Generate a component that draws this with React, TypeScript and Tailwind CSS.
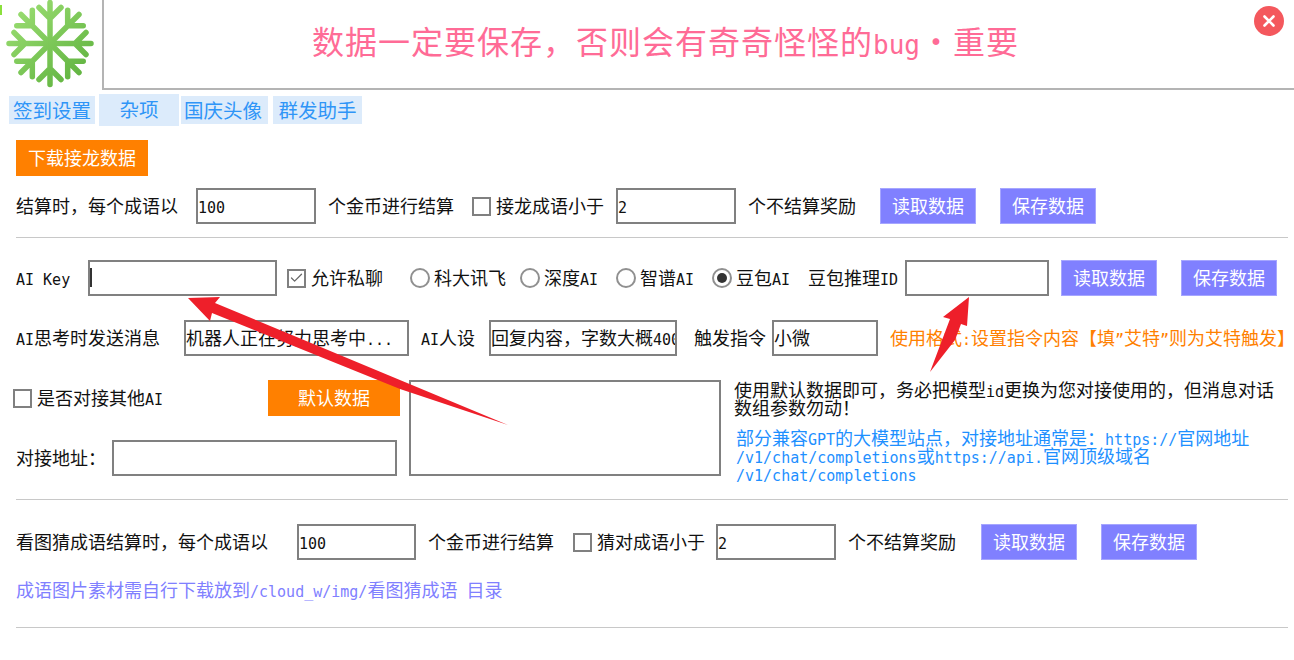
import { Check } from 'lucide-react'
import type { ReactNode } from 'react'

// half-width latin runs, the CJK font's own latin is too wide for this screen
function L({ children }: { children: ReactNode }) {
  return <span className="font-['DejaVu_Sans_Mono',monospace] text-[15px] leading-[0]">{children}</span>
}

function Lbl({ className = '', children }: { className?: string; children: ReactNode }) {
  return <span className={`-mt-[3px] shrink-0 whitespace-nowrap ${className}`}>{children}</span>
}

function Field({ className, children }: { className: string; children?: ReactNode }) {
  return (
    <div className={`flex h-[36px] shrink-0 items-center overflow-hidden whitespace-nowrap border-2 border-[#808080] bg-white text-[18px] ${className}`}>
      <span className="-mt-[2px]">{children}</span>
    </div>
  )
}

function Btn({ className = '', children }: { className?: string; children: ReactNode }) {
  return (
    <div className={`flex h-[36px] w-[96px] shrink-0 items-center justify-center border border-[#a6a6ff] bg-[#8080ff] pb-[2px] text-[18px] text-white ${className}`}>
      {children}
    </div>
  )
}

function Box({ className = '', checked = false }: { className?: string; checked?: boolean }) {
  return (
    <span className={`flex h-[19px] w-[19px] shrink-0 items-center justify-center border-2 border-[#808080] bg-white ${className}`}>
      {checked && <Check className="h-[16px] w-[16px] text-[#666666]" strokeWidth={2} />}
    </span>
  )
}

function Radio({ className, on = false, children }: { className: string; on?: boolean; children: ReactNode }) {
  return (
    <div className={`flex shrink-0 items-center ${className}`}>
      <span className="flex h-[20px] w-[20px] items-center justify-center rounded-full border-2 border-[#909090] bg-white">
        {on && <span className="h-[10px] w-[10px] rounded-full bg-[#333333]" />}
      </span>
      <Lbl className="ml-[4px]">{children}</Lbl>
    </div>
  )
}

function Snowflake() {
  const arms = [0, 45, 90, 135, 180, 225, 270, 315]
  return (
    <svg viewBox="0 0 100 88" className="h-[88px] w-[100px]">
      <defs>
        <linearGradient id="flake" x1="0" y1="0" x2="1" y2="1">
          <stop offset="0" stopColor="#a4e47a" />
          <stop offset="1" stopColor="#55ab36" />
        </linearGradient>
        <mask id="flakeMask">
          <g stroke="#ffffff" strokeWidth="5.5" strokeLinecap="round" fill="none">
            {arms.map((a) => (
              <path key={a} transform={`translate(50 43.5) rotate(${a})`} d="M0 0V-41M0 -25L-11 -36M0 -25L11 -36" />
            ))}
          </g>
        </mask>
      </defs>
      <rect width="100" height="88" fill="url(#flake)" mask="url(#flakeMask)" />
    </svg>
  )
}

function Divider({ className }: { className: string }) {
  return <div className={`ml-[16px] h-[1px] w-[1272px] bg-[#c8c8c8] ${className}`} />
}

export default function App() {
  return (
    <div className="relative h-[660px] w-[1294px] overflow-hidden bg-white font-['Noto_Sans_CJK_SC',sans-serif] text-[18px] leading-[24px] text-[#111111]">
      {/* header */}
      <div className="flex h-[90px]">
        <div className="relative w-[102px] shrink-0">
          <span className="absolute left-0 top-[5px] h-[10px] w-[2px] bg-[#8be03c]" />
          <Snowflake />
        </div>
        <div className="flex flex-1 items-start justify-between border-b-2 border-l-2 border-[#b4b4b4] pl-[208px] pr-[10px]">
          <div className="mt-[18px] whitespace-nowrap text-[32px] leading-[44px] tracking-[1px] text-[#ff6b96]">
            数据一定要保存，否则会有奇奇怪怪的
            <span className="font-['DejaVu_Sans_Mono',monospace] text-[26px] leading-[0] tracking-normal">bug</span>
            <span className="inline-block w-[33px] text-center">·</span>
            重要
          </div>
          <div className="mt-[6px] flex h-[30px] w-[30px] items-center justify-center rounded-full bg-[#f4585d]">
            <svg viewBox="0 0 12 12" className="h-[12px] w-[12px]">
              <path d="M1.5 1.5L10.5 10.5M10.5 1.5L1.5 10.5" stroke="#ffffff" strokeWidth="2.6" strokeLinecap="round" />
            </svg>
          </div>
        </div>
      </div>

      {/* tabs */}
      <div className="mt-[4px] flex h-[32px] items-center pl-[9px] text-[19.5px] text-[#2f95f7]">
        <div className="flex h-[28px] w-[86px] items-center justify-center whitespace-nowrap bg-[#dcebfb]">签到设置</div>
        <div className="ml-[4px] flex h-[32px] w-[80px] items-center justify-center bg-[#dcebfb] pb-[2px]">杂项</div>
        <div className="ml-[2px] flex h-[28px] w-[87px] items-center whitespace-nowrap bg-[#dcebfb] pl-[3px]">国庆头像</div>
        <div className="ml-[5px] flex h-[28px] w-[89px] items-center justify-center whitespace-nowrap bg-[#dcebfb]">群发助手</div>
      </div>

      <div className="ml-[16px] mt-[14px] flex h-[36px] w-[132px] items-center justify-center bg-[#ff8000] pb-[2px] text-white">
        下载接龙数据
      </div>

      {/* idiom chain settlement */}
      <div className="mt-[12px] flex items-center pl-[16px]">
        <Lbl className="w-[180px]">结算时，每个成语以</Lbl>
        <Field className="w-[120px]"><L>100</L></Field>
        <Lbl className="ml-[12px] w-[125px]">个金币进行结算</Lbl>
        <Box className="ml-[19px]" />
        <Lbl className="ml-[5px] w-[108px]">接龙成语小于</Lbl>
        <Field className="ml-[12px] w-[120px]"><L>2</L></Field>
        <Lbl className="ml-[12px] w-[108px]">个不结算奖励</Lbl>
        <Btn className="ml-[24px]">读取数据</Btn>
        <Btn className="ml-[24px]">保存数据</Btn>
      </div>

      <Divider className="mt-[13px]" />

      {/* AI key */}
      <div className="mt-[22px] flex items-center pl-[16px]">
        <Lbl className="w-[72px]"><L>AI Key</L></Lbl>
        <Field className="w-[189px]"><span className="block h-[19px] w-[2px] bg-[#333333]" /></Field>
        <Box className="ml-[10px]" checked />
        <Lbl className="ml-[5px] w-[72px]">允许私聊</Lbl>
        <Radio className="ml-[27px] w-[110px]">科大讯飞</Radio>
        <Radio className="w-[96px]">深度<L>AI</L></Radio>
        <Radio className="w-[96px]">智谱<L>AI</L></Radio>
        <Radio className="w-[96px]" on>豆包<L>AI</L></Radio>
        <Lbl className="w-[97px]">豆包推理<L>ID</L></Lbl>
        <Field className="w-[144px]" />
        <Btn className="ml-[12px]">读取数据</Btn>
        <Btn className="ml-[24px]">保存数据</Btn>
      </div>

      {/* thinking message, persona, trigger */}
      <div className="mt-[24px] flex items-center pl-[16px]">
        <Lbl className="w-[168px]"><L>AI</L>思考时发送消息</Lbl>
        <Field className="w-[225px]">机器人正在努力思考中<L>...</L></Field>
        <Lbl className="ml-[12px] w-[53px]"><L>AI</L>人设</Lbl>
        <Field className="ml-[15px] w-[188px]">回复内容，字数大概<L>400</L></Field>
        <Lbl className="ml-[17px] w-[71px]">触发指令</Lbl>
        <Field className="ml-[7px] w-[106px]">小微</Field>
        <Lbl className="ml-[12px] text-[#ff8000]">
          使用格式<L>:</L>设置指令内容【填<L>”</L>艾特<L>”</L>则为艾特触发】
        </Lbl>
      </div>

      {/* other AI */}
      <div className="mt-[24px] flex h-[96px]">
        <div className="w-[409px] shrink-0">
          <div className="flex items-center pl-[13px]">
            <Box />
            <Lbl className="ml-[5px] w-[231px]">是否对接其他<L>AI</L></Lbl>
            <div className="flex h-[36px] w-[132px] items-center justify-center bg-[#ff8000] pb-[2px] text-white">默认数据</div>
          </div>
          <div className="mt-[24px] flex items-center pl-[16px]">
            <Lbl className="w-[96px]">对接地址：</Lbl>
            <Field className="w-[285px]" />
          </div>
        </div>
        <div className="h-[96px] w-[312px] shrink-0 border-2 border-[#808080] bg-white" />
        <div className="ml-[13px] whitespace-nowrap leading-[18px]">
          <div>使用默认数据即可，务必把模型<L>id</L>更换为您对接使用的，但消息对话</div>
          <div>数组参数勿动！</div>
          <div className="ml-[2px] mt-[12px] text-[#1e90ff]">
            <div>部分兼容<L>GPT</L>的大模型站点，对接地址通常是：<L>https://</L>官网地址</div>
            <div><L>/v1/chat/completions</L>或<L>https://api.</L>官网顶级域名</div>
            <div><L>/v1/chat/completions</L></div>
          </div>
        </div>
      </div>

      <Divider className="mt-[23px]" />

      {/* picture guess settlement */}
      <div className="mt-[24px] flex items-center pl-[16px]">
        <Lbl className="w-[281px]">看图猜成语结算时，每个成语以</Lbl>
        <Field className="w-[119px]"><L>100</L></Field>
        <Lbl className="ml-[12px] w-[125px]">个金币进行结算</Lbl>
        <Box className="ml-[20px]" />
        <Lbl className="ml-[5px] w-[107px]">猜对成语小于</Lbl>
        <Field className="ml-[12px] w-[120px]"><L>2</L></Field>
        <Lbl className="ml-[12px] w-[108px]">个不结算奖励</Lbl>
        <Btn className="ml-[25px]">读取数据</Btn>
        <Btn className="ml-[24px]">保存数据</Btn>
      </div>

      <div className="ml-[16px] mt-[17px] h-[24px] whitespace-nowrap text-[#8080ff]">
        成语图片素材需自行下载放到<L>/cloud_w/img/</L>看图猜成语<L> </L>目录
      </div>

      <Divider className="mt-[26px]" />

      {/* red annotation arrows drawn over the form */}
      <svg className="absolute left-0 top-0 h-[660px] w-[1294px]" viewBox="0 0 1294 660">
        <polygon points="188,298 220,297 215,303 508,425 400,389 212,313 210,321" fill="#ee1f2a" />
        <polygon points="969,297 943,317 950,319 930,372 955,340 961,324 967,326" fill="#ee1f2a" />
      </svg>
    </div>
  )
}
